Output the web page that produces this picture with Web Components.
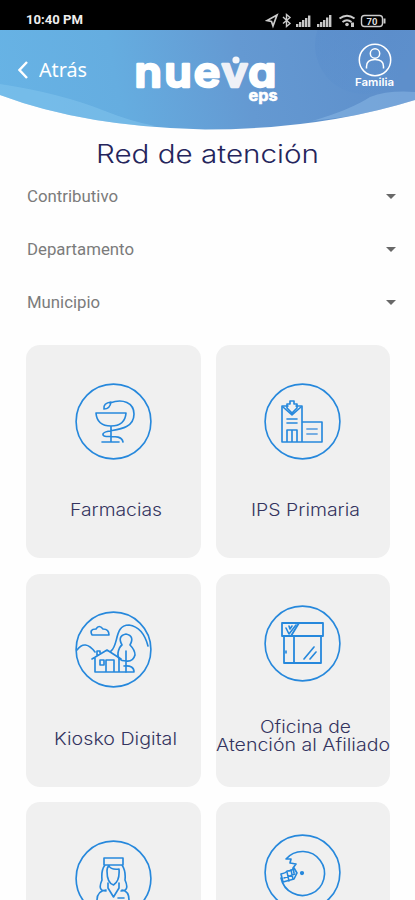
<!DOCTYPE html>
<html lang="es">
<head>
<meta charset="utf-8">
<title>Red de atención</title>
<style>
html,body{margin:0;width:415px;height:900px;overflow:hidden;background:#fefefe}
body{font-family:Inter,"Noto Sans",sans-serif}
</style>
</head>
<body>
<red-app></red-app>
<script>
const define=(name,html,init)=>customElements.define(name,class extends HTMLElement{
  connectedCallback(){
    if(this.shadowRoot)return;
    const t=document.createElement('template');
    t.innerHTML=typeof html==='function'?html(this):html;
    this.attachShadow({mode:'open'}).append(t.content.cloneNode(true));
    if(init)init(this,this.shadowRoot);
  }
});

/* A line of text stretched to a given width */
define('fit-text',el=>`<style>
:host{display:block;width:${el.getAttribute('width')}px;white-space:nowrap}
span{display:inline-block;transform-origin:0 50%}
</style><span><slot></slot></span>`,(el,root)=>{
  const s=root.querySelector('span');
  s.style.transform=`scaleX(${el.getAttribute('width')/s.getBoundingClientRect().width})`;
});

define('status-bar',`<style>
:host{display:flex;height:30px;background:#000;color:#eee;justify-content:space-between;align-items:center;padding:9px 24px 0 26px;box-sizing:border-box;font:700 12px/20px Roboto,sans-serif}
svg{display:block}
</style><fit-text width="57">10:40 PM</fit-text>
<svg width="126" height="20" viewBox="0 0 126 20" fill="none" stroke="#ccc" stroke-width="1.400">
<path d="M12 5 2 10.500l4.500 1 1.500 4.500z" stroke-width="1.700"/>
<path d="m18 7 7 6.500-3.500 3V4.500L25 7.500 18 13.500"/>
<g stroke="none" fill="#c8c8c8"><path d="M31 14h2.400v3H31zM34 12h2.400v5H34zM37 10h2.400v7H37zM40 8h2.400v9H40zM43 5.500h2.400V17H43zM52 14h2.400v3H52zM55 12h2.400v5H55zM58 10h2.400v7H58zM61 7.500h2.400V17H61zM64 5h2.400v12H64z"/><circle cx="82" cy="14.500" r="1.800"/><path d="M86 12.500h3V17h-3z"/></g>
<path stroke-width="2" d="M74.500 8.500q7.500-5.500 15 0M77.500 12q4.500-3.500 9 0"/>
<rect x="96.500" y="5.500" width="21" height="11" rx="3"/><path d="M119.500 8.500v5" stroke-width="2"/>
<text x="107" y="14.500" text-anchor="middle" font-size="9.500" textLength="11" fill="#ddd" stroke="none">70</text>
</svg>`);

define('app-header',`<style>
:host{display:grid;height:100px;color:#fff}
:host>*{grid-area:1/1}
.bar{display:flex;align-items:flex-start;padding:0 21px 0 18px;box-sizing:border-box}
.back{display:flex;align-items:center;gap:11px;margin-top:26px;font:400 20px/28px "Noto Sans",sans-serif}
.logo{margin-left:45px;margin-top:20px;overflow:visible}
.user{margin-left:auto;margin-top:13px;display:flex;flex-direction:column;align-items:center;font:600 10.500px/12px Inter,sans-serif}
svg{display:block}
.logo text{font-family:Inter,sans-serif;font-feature-settings:"cv11";fill:#fff;stroke:#fff;stroke-linejoin:round}
.logo text .v{fill:#eef1f7;stroke:#eef1f7}
</style>
<svg width="415" height="100" viewBox="0 0 415 100"><defs>
<linearGradient id="g" gradientUnits="userSpaceOnUse" x1="0" y1="80" x2="390" y2="0"><stop offset="0" stop-color="#67b3e5"/><stop offset=".3" stop-color="#65ade0"/><stop offset=".62" stop-color="#6499d2"/><stop offset="1" stop-color="#5e8fcb"/></linearGradient>
<linearGradient id="c" x1="0" y1="0" x2="1" y2="1"><stop stop-color="#4e83c7" stop-opacity=".28"/><stop offset="1" stop-color="#5c92d0" stop-opacity=".2"/></linearGradient>
<clipPath id="p"><path d="M0 0H415V70Q320 99.500 205 99.500Q85 97 0 65Z"/></clipPath></defs>
<g clip-path="url(#p)"><path fill="url(#g)" d="M0 0h415v100H0z"/><circle cx="364" cy="15" r="49" fill="url(#c)"/>
<path d="M0 54Q60 63 105 81Q130 91 155 96L100 100 0 70z" fill="#8acaf0" fill-opacity=".42"/>
<path d="M415 62Q388 60 370 67Q350 80 312 91L415 78z" fill="#9bc8ee" fill-opacity=".38"/></g>
</svg>
<div class="bar">
<div class="back"><svg width="10" height="18" viewBox="0 0 10 18" fill="none" stroke="#fff" stroke-width="2.400"><path d="M9 1 1.500 9 9 17"/></svg><fit-text width="48">Atrás</fit-text></div>
<svg class="logo" width="148" height="60" viewBox="132 50 148 60">
<text transform="scale(1.08 1)" y="87.500" font-size="41.500" font-weight="600" stroke-width="2.400" x="124.600 152 179.500 205 229.800">nue<tspan class="v">v</tspan>a</text>
<circle cx="236" cy="60" r="3.600" fill="#f4f6fa"/>
<text x="248.500" y="101" font-size="15.500" font-weight="700" stroke-width=".6" textLength="29" lengthAdjust="spacingAndGlyphs">eps</text></svg>
<div class="user"><svg width="34" height="34" viewBox="0 0 34 34" fill="none" stroke="#fff" stroke-width="1.500"><circle cx="17" cy="17" r="15.700"/><circle cx="17" cy="10.500" r="4.700"/><path d="M8.500 25.500v-2q0-7 8.500-7t8.500 7v2"/></svg><fit-text width="39">Familia</fit-text></div>
</div>`);

define('select-row',`<style>
:host{display:flex;justify-content:space-between;align-items:center;height:52.700px;padding:0 19px 0 27px;color:#7b7b7b;font:400 16px/24px Roboto,sans-serif}
i{border:5px solid transparent;border-top:5px solid #686868;border-bottom:0;margin-bottom:1px}
</style><slot></slot><i></i>`);

const icons={
pharmacy:`<path d="M21 30H51Q50 43 36 43Q22 43 21 30ZM36 43V59M27 59H44M29 26Q28 20 36 19Q35 26 29 26M35 20C48 15 59 20 59 31C59 51 29 45 28 51C27 57 46 49 48 59"/>`,
hospital:`<path d="M24 23H18V59H58V39H38V23H32M38 39V59M23 59V47H33V59M28 47V59"/><path d="M26 18H30V21H33V25L28 30 23 25V21H26ZM19 24 28 32 37 24M23 36H33M23 40H33"/><path stroke="#78aee2" stroke-width="1.800" d="M43 46H53M43 51H53"/>`,
village:`<path d="M17 24Q14 18 21 18Q24 13 28 18Q34 18 34 24ZM2 39Q10 28 20 41M36 40C44 34 39 14 54 14Q68 16 73 35M17 48 32 39 46 48M20 46V61H59Q59 54 49 55M44 48V61M31 61V49H39V61M25 49h4v5h-4zM22 44v-4h3v2"/><path d="M51 61V40M51 50Q42 50 43 42Q44 36 47 34Q42 25 51 23Q60 25 55 34Q60 39 60 44Q58 51 51 50"/>`,
store:`<path stroke-width="1.800" d="M18 18H59V31H18ZM20 31V58H57V31M30 31V58M27 31 35 18"/><path d="m22 23 3 6 7-9M22 46v2M40 54 50 42M46 54l6-7"/><path d="m25 21 1 3 2-3"/>`,
nurse:`<path d="M29 18H48V25H29ZM30 25Q26 30 27 40Q22 51 31 51M47 25Q51 31 50 40Q55 51 46 51M32 31Q32 43 38.500 45Q45 41 44 29Q36 30 34 26Q32 27 32 31M33 43v5l5.500 9 5.500-9v-5M31 50Q22 51 22 60V65M47 50Q54 51 54 60V65M43 58h6"/>`,
tooth:`<path d="M22 25A22 22 0 1 1 17 44M22 25l5 0-1 4 6 1-3 4 1 5"/><path d="M17 40q5-1 6-3 5 0 7-3l3 5-3 6-11 3z"/><path stroke-width="1.500" d="m20 44 11-4M23 38l2 9M27 36l2 9"/><circle cx="38" cy="39" r="1.300" fill="#2688dc"/>`};

define('line-icon',el=>`<style>:host{display:block;width:77px;height:77px}svg{display:block}</style>
<svg width="77" height="77" viewBox="0 0 77 77" fill="none" stroke="#2688dc" stroke-width="1.650" stroke-linecap="round" stroke-linejoin="round"><circle cx="38.500" cy="38.500" r="37.400"/>${icons[el.getAttribute('name')]}</svg>`);

define('service-card',el=>`<style>
:host{display:flex;flex-direction:column;align-items:center;height:213px;padding-top:${el.hasAttribute('tall')?31.5:37.5}px;box-sizing:border-box;background:#f0f0f0;border-radius:14px;color:#34345f;font:300 17px/18px Inter,sans-serif}
:host(:nth-child(even)) line-icon{margin-right:1px}
.label{margin-top:${el.hasAttribute('tall')?35.5:41.5}px;display:flex;flex-direction:column;align-items:center}
::slotted(fit-text:not([wide])){margin-left:5px}
</style><line-icon name="${el.getAttribute('icon')}"></line-icon><div class="label"><slot></slot></div>`);

define('red-app',`<style>
:host{display:block;width:415px;height:900px;overflow:hidden}
.title{display:flex;justify-content:center;margin-top:7px;height:34px;font:300 25px/34px Inter,sans-serif;color:#25255c}
.grid{display:grid;grid-template-columns:174.500px 174px;gap:15.500px;padding:0 0 0 26px;margin-top:16px}
</style>
<status-bar></status-bar><app-header></app-header>
<div class="title"><fit-text width="223">Red de atención</fit-text></div>
<div><select-row><fit-text width="91">Contributivo</fit-text></select-row><select-row><fit-text width="107">Departamento</fit-text></select-row><select-row><fit-text width="73">Municipio</fit-text></select-row></div>
<div class="grid">
<service-card icon="pharmacy"><fit-text width="92">Farmacias</fit-text></service-card>
<service-card icon="hospital"><fit-text width="109">IPS Primaria</fit-text></service-card>
<service-card icon="village"><fit-text width="123">Kiosko Digital</fit-text></service-card>
<service-card icon="store" tall><fit-text width="91">Oficina de</fit-text><fit-text wide width="174">Atención al Afiliado</fit-text></service-card>
<service-card icon="nurse"></service-card>
<service-card icon="tooth" tall></service-card>
</div>`);
</script>
</body>
</html>
